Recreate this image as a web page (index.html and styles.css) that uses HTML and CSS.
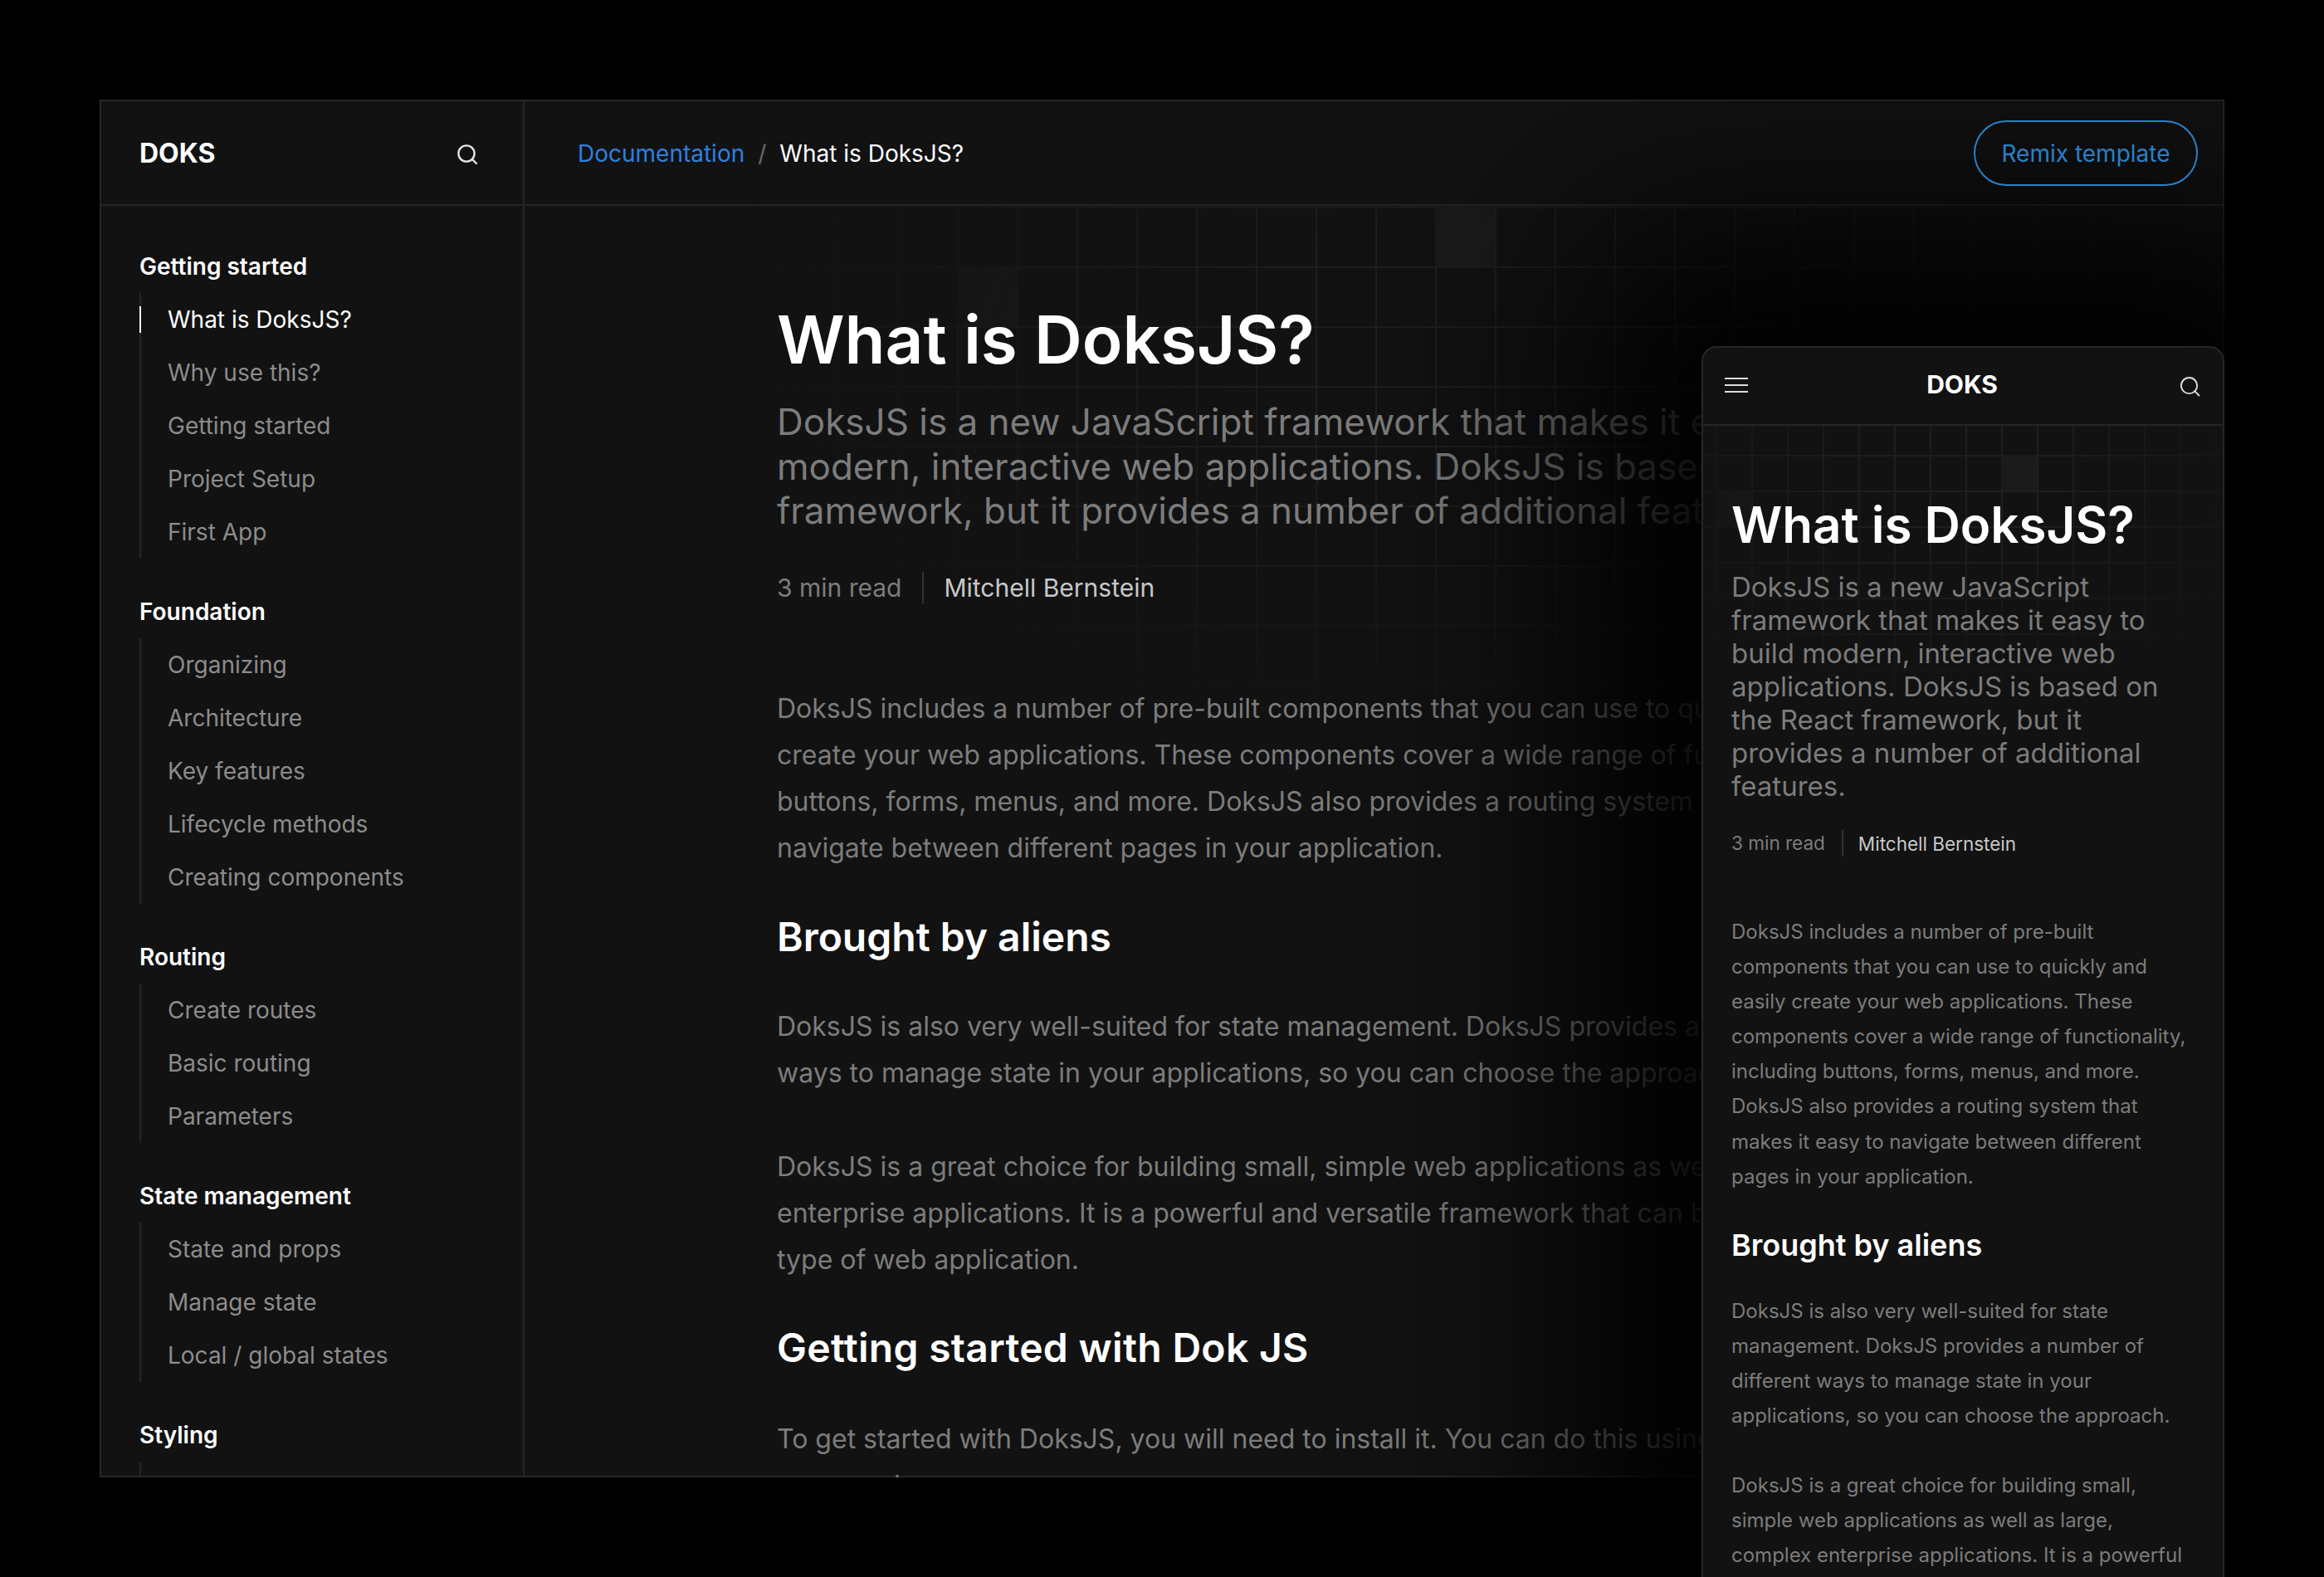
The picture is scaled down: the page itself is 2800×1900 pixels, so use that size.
FILE: index.html
```html
<!DOCTYPE html>
<html lang="en">
<head>
    <meta charset="UTF-8">
    <title>DoksJS</title>
    <link rel="stylesheet" href="styles.css">
</head>
<body>
    <div class="frame">
        <aside class="sidebar">
            <div class="side-head">
                <span class="brand">DOKS</span>
                <svg class="icon-search" viewBox="0 0 26 26" fill="none" stroke="currentColor" stroke-width="2.4" stroke-linecap="round"><circle cx="12" cy="12" r="9.6"/><path d="M19 19l5 5"/></svg>
            </div>
            <nav class="side-nav">
                <div class="nav-group">
                    <h4>Getting started</h4>
                    <ul>
                        <li class="active">What is DoksJS?</li>
                        <li>Why use this?</li>
                        <li>Getting started</li>
                        <li>Project Setup</li>
                        <li>First App</li>
                    </ul>
                </div>
                <div class="nav-group">
                    <h4>Foundation</h4>
                    <ul>
                        <li>Organizing</li>
                        <li>Architecture</li>
                        <li>Key features</li>
                        <li>Lifecycle methods</li>
                        <li>Creating components</li>
                    </ul>
                </div>
                <div class="nav-group">
                    <h4>Routing</h4>
                    <ul>
                        <li>Create routes</li>
                        <li>Basic routing</li>
                        <li>Parameters</li>
                    </ul>
                </div>
                <div class="nav-group">
                    <h4>State management</h4>
                    <ul>
                        <li>State and props</li>
                        <li>Manage state</li>
                        <li>Local / global states</li>
                    </ul>
                </div>
                <div class="nav-group">
                    <h4>Styling</h4>
                    <ul>
                        <li></li>
                    </ul>
                </div>
            </nav>
        </aside>

        <main class="main">
            <header class="topbar">
                <div class="crumbs">
                    <a class="crumb-link">Documentation</a>
                    <span class="crumb-sep">/</span>
                    <span class="crumb-current">What is DoksJS?</span>
                </div>
                <a class="btn-remix">Remix template</a>
            </header>
            <article class="article">
                <h1>What is DoksJS?</h1>
                <p class="lead">DoksJS is a new JavaScript framework that makes it easy to build<br>modern, interactive web applications. DoksJS is based on the React<br>framework, but it provides a number of additional features.</p>
                <div class="meta">
                    <span class="meta-time">3 min read</span>
                    <span class="meta-author">Mitchell Bernstein</span>
                </div>
                <p class="first">DoksJS includes a number of pre-built components that you can use to quickly and easily<br>create your web applications. These components cover a wide range of functionality, including<br>buttons, forms, menus, and more. DoksJS also provides a routing system that makes it easy to<br>navigate between different pages in your application.</p>
                <h2>Brought by aliens</h2>
                <p>DoksJS is also very well-suited for state management. DoksJS provides a number of different<br>ways to manage state in your applications, so you can choose the approach.</p>
                <p class="next">DoksJS is a great choice for building small, simple web applications as well as large, complex<br>enterprise applications. It is a powerful and versatile framework that can be used to build any<br>type of web application.</p>
                <h2 class="h2-install">Getting started with Dok JS</h2>
                <p>To get started with DoksJS, you will need to install it. You can do this using the command<br>npm, package manager.</p>
            </article>
        </main>

        <section class="phone">
            <header class="phone-head">
                <svg class="icon-menu" viewBox="0 0 28 18" fill="none" stroke="currentColor" stroke-width="2"><path d="M0 1h28M0 9h28M0 17h28"/></svg>
                <span class="phone-brand">DOKS</span>
                <svg class="icon-search-sm" viewBox="0 0 26 26" fill="none" stroke="currentColor" stroke-width="2" stroke-linecap="round"><circle cx="12" cy="12" r="10"/><path d="M19 19l5.5 5.5"/></svg>
            </header>
            <div class="phone-body">
                <h1>What is DoksJS?</h1>
                <p class="lead">DoksJS is a new JavaScript framework that makes it easy to build modern, interactive web applications. DoksJS is based on the React framework, but it provides a number of additional features.</p>
                <div class="meta">
                    <span class="meta-time">3 min read</span>
                    <span class="meta-author">Mitchell Bernstein</span>
                </div>
                <p class="first">DoksJS includes a number of pre-built components that you can use to quickly and easily create your web applications. These components cover a wide range of functionality, including buttons, forms, menus, and more. DoksJS also provides a routing system that makes it easy to navigate between different pages in your application.</p>
                <h2>Brought by aliens</h2>
                <p>DoksJS is also very well-suited for state management. DoksJS provides a number of different ways to manage state in your applications, so you can choose the approach.</p>
                <p class="next">DoksJS is a great choice for building small, simple web applications as well as large, complex enterprise applications. It is a powerful and versatile framework that can be used to build any type of web application.</p>
            </div>
        </section>
    </div>
</body>
</html>
```
FILE: styles.css
```css
* {
    box-sizing: border-box;
}
html, body {
    margin: 0;
    padding: 0;
    height: 1900px;
    overflow: hidden;
    background-color: #000;
}
body {
    font-family: Inter, "Liberation Sans", sans-serif;
    padding: 120px 120px 0;
}
h1, h2, h4, p, ul {
    margin: 0;
    padding: 0;
}
ul {
    list-style: none;
}

.frame {
    position: relative;
    width: 2560px;
    height: 1660px;
    display: flex;
    background-color: #121212;
    box-shadow: inset 0 0 0 2px #262626;
}

/* Sidebar */
.sidebar {
    width: 512px;
    height: 1660px;
    flex-shrink: 0;
    overflow: hidden;
    border-right: 2px solid #262626;
    border-bottom: 2px solid #262626;
}
.side-head {
    height: 128px;
    padding: 3px 54px 0 48px;
    display: flex;
    align-items: center;
    justify-content: space-between;
    border-bottom: 2px solid #262626;
}
.brand {
    font-size: 32px;
    font-weight: 700;
    color: #fff;
}
.icon-search {
    width: 26px;
    height: 26px;
    color: #e6e6e6;
    margin-top: 2px;
}
.side-nav {
    padding: 41px 0 0 48px;
}
.nav-group {
    margin-bottom: 32px;
}
.nav-group h4 {
    height: 64px;
    line-height: 64px;
    font-size: 28px;
    font-weight: 600;
    color: #fff;
}
.nav-group ul {
    border-left: 2px solid #262626;
}
.nav-group li {
    position: relative;
    height: 64px;
    line-height: 64px;
    padding-left: 32px;
    font-size: 28px;
    color: #8c8c8c;
}
.nav-group li.active {
    color: #fff;
}
.nav-group li.active::before {
    content: "";
    position: absolute;
    left: -2px;
    top: 16px;
    width: 2px;
    height: 32px;
    background-color: #fff;
}

/* Main column */
.main {
    position: relative;
    flex: 1;
    min-width: 0;
    height: 1660px;
    overflow: hidden;
}
.main::before {
    content: "";
    position: absolute;
    left: 0;
    right: 0;
    top: 128px;
    height: 700px;
    background:
        linear-gradient(#1b1b1b, #1b1b1b) 1097px 1px / 72px 72px no-repeat,
        linear-gradient(#1b1b1b, #1b1b1b) 521px 73px / 72px 72px no-repeat,
        linear-gradient(90deg, #1e1e1e 2px, transparent 2px) 17px 0 / 72px 72px,
        linear-gradient(#1e1e1e 2px, transparent 2px) 0 1px / 72px 72px;
    -webkit-mask-image: radial-gradient(ellipse 950px 500px at 1170px 170px, #000 30%, transparent 100%);
    mask-image: radial-gradient(ellipse 950px 500px at 1170px 170px, #000 30%, transparent 100%);
}
.topbar {
    position: relative;
    height: 128px;
    padding: 3px 32px 0 64px;
    display: flex;
    align-items: center;
    justify-content: space-between;
    border-bottom: 2px solid #262626;
}
.crumbs {
    display: flex;
    align-items: center;
    gap: 16px;
    font-size: 28px;
}
.crumb-link {
    color: #2f80e0;
}
.crumb-sep {
    color: #6a6a6a;
}
.crumb-current {
    color: #fff;
}
.btn-remix {
    position: relative;
    z-index: 2;
    height: 79px;
    width: 270px;
    display: flex;
    align-items: center;
    justify-content: center;
    border: 2px solid #2a80c8;
    border-radius: 40px;
    font-size: 28px;
    color: #2a80c8;
}

.article {
    position: relative;
    padding: 111px 0 0 304px;
    white-space: nowrap;
}
.article h1 {
    font-size: 80px;
    line-height: 100px;
    font-weight: 600;
    color: #fff;
}
.article .lead {
    margin-top: 23px;
    font-size: 44px;
    line-height: 53.6px;
    color: #7c7c7c;
}
.meta {
    display: flex;
    align-items: center;
}
.meta-time {
    color: #7c7c7c;
}
.meta-author {
    color: #c8c8c8;
}
.article .meta {
    margin-top: 37px;
    height: 56px;
    font-size: 30px;
}
.article .meta-time {
    padding-right: 25px;
    border-right: 2px solid #333;
    margin-right: 24px;
    line-height: 38px;
}
.article p {
    font-size: 32px;
    line-height: 55.9px;
    color: #7c7c7c;
}
.article .first {
    margin-top: 90px;
}
.article .next {
    margin-top: 57px;
}
.article h2 {
    margin: 48px 0;
    font-size: 48px;
    line-height: 64px;
    font-weight: 600;
    color: #fff;
}
.article .h2-install {
    margin: 46px 0 50px;
    letter-spacing: 0.3px;
}

/* Mobile preview */
.phone {
    position: absolute;
    z-index: 1;
    left: 1930px;
    top: 297px;
    width: 630px;
    height: 1500px;
    background-color: #121212;
    border: 2px solid #262626;
    border-radius: 18px 18px 0 0;
    box-shadow: 0 0 560px 150px #000;
    overflow: hidden;
}
.phone-head {
    height: 94px;
    padding: 0 27px 4px 26px;
    display: flex;
    align-items: center;
    justify-content: space-between;
    border-bottom: 2px solid #262626;
}
.icon-menu {
    width: 28px;
    height: 18px;
    color: #ddd;
    margin-top: 2px;
}
.phone-brand {
    font-size: 30px;
    font-weight: 700;
    color: #fff;
}
.icon-search-sm {
    width: 25px;
    height: 25px;
    color: #ddd;
    margin: 4px 0 0 4px;
}
.phone-body {
    position: relative;
    padding: 83px 34px 0;
}
.phone-body::before {
    content: "";
    position: absolute;
    left: 0;
    right: 0;
    top: 0;
    height: 340px;
    background:
        linear-gradient(#1b1b1b, #1b1b1b) 359px 35px / 43px 43px no-repeat,
        linear-gradient(#1b1b1b, #1b1b1b) 15px 78px / 43px 43px no-repeat,
        linear-gradient(90deg, #1e1e1e 2px, transparent 2px) 15px 0 / 43px 43px,
        linear-gradient(#1e1e1e 2px, transparent 2px) 0 35px / 43px 43px;
    -webkit-mask-image: radial-gradient(ellipse 420px 300px at 300px 60px, #000 30%, transparent 100%);
    mask-image: radial-gradient(ellipse 420px 300px at 300px 60px, #000 30%, transparent 100%);
}
.phone-body > * {
    position: relative;
}
.phone-body h1 {
    font-size: 60px;
    line-height: 72px;
    font-weight: 600;
    color: #fff;
}
.phone-body .lead {
    margin-top: 19px;
    font-size: 33px;
    line-height: 40px;
    color: #7c7c7c;
}
.phone-body .meta {
    margin-top: 33px;
    height: 32px;
    font-size: 22.5px;
}
.phone-body .meta-time {
    padding-right: 20px;
    border-right: 2px solid #333;
    margin-right: 18px;
    line-height: 32px;
}
.phone-body p {
    font-size: 24px;
    line-height: 42.1px;
    color: #7c7c7c;
}
.phone-body .first {
    margin-top: 70px;
}
.phone-body .next {
    margin-top: 42px;
}
.phone-body h2 {
    margin: 37px 0 35px;
    font-size: 36px;
    line-height: 48px;
    font-weight: 600;
    color: #fff;
}
```
